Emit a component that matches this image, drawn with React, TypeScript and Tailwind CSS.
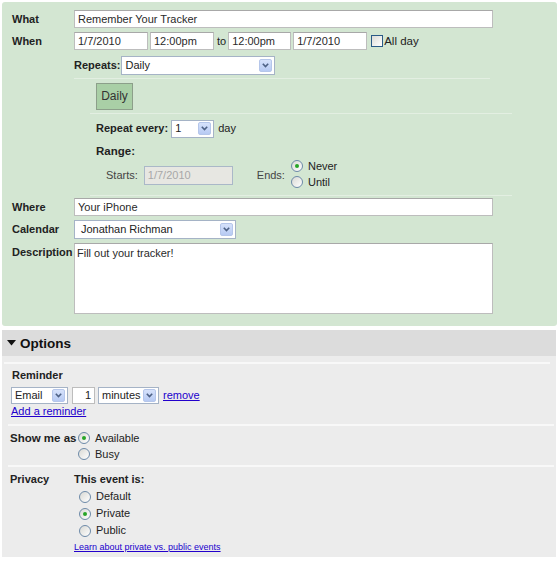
import React from "react";

function Chevron() {
  return (
    <span className="flex items-center justify-center w-[13px] h-[13px] rounded-[2px] bg-gradient-to-b from-[#d6e2fb] to-[#b7caf3] border border-[#b5c6ea]">
      <svg width="7" height="5" viewBox="0 0 7 5">
        <path d="M0.8 0.8 L3.5 3.6 L6.2 0.8" fill="none" stroke="#4d6185" strokeWidth="1.6" />
      </svg>
    </span>
  );
}

function Select({ label, className }: { label: string; className: string }) {
  return (
    <div className={"flex items-center bg-white border border-[#a5b3c6] pl-[3px] pr-[2px] " + className}>
      <span className="flex-1 text-[#222] whitespace-nowrap">{label}</span>
      <Chevron />
    </div>
  );
}

function Radio({ checked }: { checked?: boolean }) {
  return (
    <span className="inline-flex items-center justify-center w-[12px] h-[12px] rounded-full border border-[#6d8aa8] bg-gradient-to-br from-[#d9d9d4] to-white shrink-0">
      {checked && <span className="w-[4px] h-[4px] rounded-full bg-[#27a527]" />}
    </span>
  );
}

function Input({ value, className }: { value: string; className: string }) {
  return (
    <div className={"flex items-center bg-white border border-[#bdbdbd] border-t-[#a8a8a8] px-[3px] text-[#2a2a2a] whitespace-nowrap " + className}>
      {value}
    </div>
  );
}

export default function App() {
  return (
    <div className="w-[560px] h-[570px] bg-white font-['Liberation_Sans',Arial,sans-serif] text-[11px] leading-[13px] text-[#222] pt-[2px]">
      {/* Green event panel */}
      <div className="ml-[2px] w-[555px] rounded-[3px] bg-[#d3e6d2] pt-[8px] pb-[12px] pl-[10px]">
        {/* What */}
        <div className="flex items-center h-[18px]">
          <div className="w-[62px] font-bold">What</div>
          <Input value="Remember Your Tracker" className="w-[419px] h-[18px]" />
        </div>
        {/* When */}
        <div className="flex items-center h-[18px] mt-[4px]">
          <div className="w-[62px] font-bold">When</div>
          <Input value="1/7/2010" className="w-[74px] h-[18px]" />
          <Input value="12:00pm" className="w-[64px] h-[18px] ml-[2px]" />
          <span className="ml-[3px] mr-[2px]">to</span>
          <Input value="12:00pm" className="w-[63px] h-[18px]" />
          <Input value="1/7/2010" className="w-[74px] h-[18px] ml-[2px]" />
          <span className="ml-[4px] w-[12px] h-[12px] border border-[#2a5a86] bg-gradient-to-br from-[#dcdcd7] to-white" />
          <span className="ml-[1px] text-[11.5px]">All day</span>
        </div>
        {/* Repeats */}
        <div className="flex items-center h-[18px] mt-[6px] ml-[62px]">
          <span className="font-bold">Repeats:</span>
          <Select label="Daily" className="w-[154px] h-[19px] ml-[1px]" />
        </div>
        <div className="mt-[4px] ml-[62px] w-[416px] h-px bg-[#e3efe2]" />
        {/* Daily button */}
        <div className="mt-[4px] ml-[84px] w-[37px] h-[27px] flex items-center justify-center bg-[#a9cfa6] border border-[#8c9f8a] text-[12px] text-[#333]">
          Daily
        </div>
        <div className="mt-[3px] ml-[78px] w-[422px] h-px bg-[#e3efe2]" />
        {/* Repeat every */}
        <div className="flex items-center h-[17px] mt-[6px] ml-[84px]">
          <span className="font-bold text-[11px]">Repeat every:</span>
          <Select label="1" className="w-[43px] h-[18px] ml-[3px]" />
          <span className="ml-[4px]">day</span>
        </div>
        {/* Range */}
        <div className="mt-[8px] ml-[84px] h-[13px] font-bold text-[11.5px]">Range:</div>
        <div className="flex items-start h-[32px] ml-[94px]">
          <div className="flex items-center mt-[8px] h-[19px]">
            <span className="text-[#444]">Starts:</span>
            <div className="ml-[6px] w-[89px] h-[19px] flex items-center px-[3px] bg-[#e7e7e2] border border-[#aab8c8] text-[#a8a8a8]">1/7/2010</div>
            <span className="ml-[24px] text-[#444]">Ends:</span>
          </div>
          <div className="ml-[6px] flex flex-col">
            <div className="flex items-center h-[16px] gap-[5px]">
              <Radio checked />
              <span>Never</span>
            </div>
            <div className="flex items-center h-[16px] gap-[5px]">
              <Radio />
              <span>Until</span>
            </div>
          </div>
        </div>
        <div className="mt-[5px] ml-[78px] w-[422px] h-px bg-[#e3efe2]" />
        {/* Where */}
        <div className="flex items-center h-[18px] mt-[2px]">
          <div className="w-[62px] font-bold">Where</div>
          <Input value="Your iPhone" className="w-[419px] h-[18px]" />
        </div>
        {/* Calendar */}
        <div className="flex items-center h-[19px] mt-[4px]">
          <div className="w-[62px] font-bold">Calendar</div>
          <Select label="Jonathan Richman" className="w-[162px] h-[19px] pl-[6px]" />
        </div>
        {/* Description */}
        <div className="flex items-start mt-[4px]">
          <div className="w-[62px] font-bold pt-[3px]">Description</div>
          <div className="w-[419px] h-[71px] bg-white border border-[#bdbdbd] border-t-[#a8a8a8] px-[2px] pt-[3px] text-[#2a2a2a]">
            Fill out your tracker!
          </div>
        </div>
      </div>

      {/* Options panel */}
      <div className="ml-[2px] w-[554px] mt-[4px] bg-[#ececec]">
        <div className="h-[26px] bg-[#dcdcdc] flex items-center pl-[5px]">
          <svg width="9" height="6" viewBox="0 0 9 6" className="mr-[4px]">
            <path d="M0 0 L9 0 L4.5 5.5 Z" fill="#111" />
          </svg>
          <span className="font-bold text-[13.5px] text-[#111]">Options</span>
        </div>
        <div className="pt-[6px] pb-[4px]">
          <div className="ml-[2px] w-[546px] h-[2px] bg-[#f8f8f8]" />
          <div className="mt-[5px] ml-[10px] h-[13px] font-bold">Reminder</div>
          <div className="mt-[5px] ml-[9px] flex items-center h-[16px]">
            <Select label="Email" className="w-[57px] h-[17px]" />
            <div className="ml-[4px] w-[23px] h-[17px] bg-white border border-[#bdbdbd] flex items-center justify-end pr-[3px]">1</div>
            <Select label="minutes" className="ml-[3px] w-[61px] h-[17px]" />
            <a className="ml-[4px] text-[#2200cc] underline">remove</a>
          </div>
          <div className="mt-[2px] ml-[9px] h-[13px]">
            <a className="text-[#2200cc] underline">Add a reminder</a>
          </div>
          <div className="mt-[6px] ml-[6px] w-[546px] h-[2px] bg-[#f8f8f8]" />
          <div className="mt-[4px] flex items-start">
            <div className="ml-[8px] w-[68px] font-bold h-[16px] flex items-center whitespace-nowrap text-[11.5px]">Show me as</div>
            <div className="flex flex-col">
              <div className="flex items-center h-[16px] gap-[5px]">
                <Radio checked />
                <span>Available</span>
              </div>
              <div className="flex items-center h-[16px] gap-[5px]">
                <Radio />
                <span>Busy</span>
              </div>
            </div>
          </div>
          <div className="mt-[3px] ml-[6px] w-[546px] h-[2px] bg-[#f8f8f8]" />
          <div className="mt-[5px] flex items-start">
            <div className="ml-[8px] w-[64px] font-bold h-[14px] flex items-center">Privacy</div>
            <div className="flex flex-col">
              <div className="h-[14px] flex items-center font-bold">This event is:</div>
              <div className="mt-[2px] flex flex-col ml-[5px]">
                <div className="flex items-center h-[17px] gap-[5px]">
                  <Radio />
                  <span>Default</span>
                </div>
                <div className="flex items-center h-[17px] gap-[5px]">
                  <Radio checked />
                  <span>Private</span>
                </div>
                <div className="flex items-center h-[17px] gap-[5px]">
                  <Radio />
                  <span>Public</span>
                </div>
              </div>
              <div className="mt-[2px] h-[12px] flex items-center">
                <a className="text-[9px] text-[#2200cc] underline">Learn about private vs. public events</a>
              </div>
            </div>
          </div>
        </div>
      </div>
    </div>
  );
}
